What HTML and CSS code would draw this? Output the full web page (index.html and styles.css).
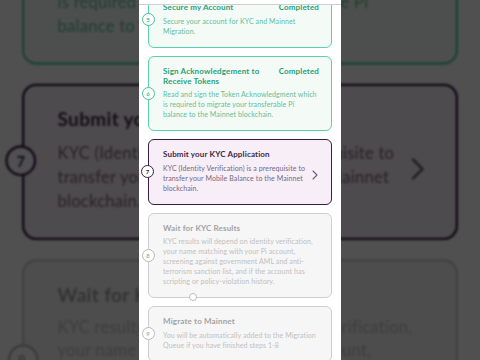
FILE: index.html
```html
<!DOCTYPE html>
<html lang="en">
<head>
<meta charset="utf-8">
<title>Mainnet Checklist</title>
<link rel="stylesheet" href="styles.css">
</head>
<body>
<div class="stage">
  <div class="backdrop" aria-hidden="true">
    <div class="phone phone-blur">
      <div class="topbar"></div>
      <div class="steps">
        <div class="step done">
          <span class="step-num">5</span>
          <div class="step-body">
            <div class="step-head"><span class="step-title">Secure my Account</span><span class="step-status">Completed</span></div>
            <p class="step-desc lines">Secure your account for KYC and Mainnet<br>Migration.</p>
          </div>
        </div>
        <div class="step done">
          <span class="step-num">6</span>
          <div class="step-body">
            <div class="step-head"><span class="step-title">Sign Acknowledgement to Receive Tokens</span><span class="step-status">Completed</span></div>
            <p class="step-desc lines">Read and sign the Token Acknowledgment which<br>is required to migrate your transferable Pi<br>balance to the Mainnet blockchain.</p>
          </div>
        </div>
        <div class="step active">
          <span class="step-num">7</span>
          <div class="step-body">
            <div class="step-head"><span class="step-title">Submit your KYC Application</span></div>
            <p class="step-desc">KYC (Identity Verification) is a prerequisite to transfer your Mobile Balance to the Mainnet blockchain.</p>
          </div>
          <svg class="chevron" viewBox="0 0 6 10" width="6" height="10"><path d="M1 1 L5 5 L1 9" fill="none" stroke="currentColor" stroke-width="1.1" stroke-linecap="round" stroke-linejoin="round"/></svg>
        </div>
        <div class="step pending">
          <span class="step-num">8</span>
          <div class="step-body">
            <div class="step-head"><span class="step-title">Wait for KYC Results</span></div>
            <p class="step-desc">KYC results will depend on identity verification, your name matching with your Pi account, screening against government AML and anti-terrorism sanction list, and if the account has scripting or policy-violation history.</p>
          </div>
        </div>
        <div class="step pending">
          <span class="step-num">9</span>
          <div class="step-body">
            <div class="step-head"><span class="step-title">Migrate to Mainnet</span></div>
            <p class="step-desc">You will be automatically added to the Migration Queue if you have finished steps 1-8</p>
          </div>
        </div>
      </div>
    </div>
  </div>

  <div class="phone phone-main">
    <div class="topbar"></div>
    <div class="steps">
      <div class="step done">
        <span class="step-num">5</span>
        <div class="step-body">
          <div class="step-head"><span class="step-title">Secure my Account</span><span class="step-status">Completed</span></div>
          <p class="step-desc lines">Secure your account for KYC and Mainnet<br>Migration.</p>
        </div>
      </div>
      <div class="step done">
        <span class="step-num">6</span>
        <div class="step-body">
          <div class="step-head"><span class="step-title">Sign Acknowledgement to Receive Tokens</span><span class="step-status">Completed</span></div>
          <p class="step-desc lines">Read and sign the Token Acknowledgment which<br>is required to migrate your transferable Pi<br>balance to the Mainnet blockchain.</p>
        </div>
      </div>
      <div class="step active">
        <span class="step-num">7</span>
        <div class="step-body">
          <div class="step-head"><span class="step-title">Submit your KYC Application</span></div>
          <p class="step-desc">KYC (Identity Verification) is a prerequisite to transfer your Mobile Balance to the Mainnet blockchain.</p>
        </div>
        <svg class="chevron" viewBox="0 0 6 10" width="6" height="10"><path d="M1 1 L5 5 L1 9" fill="none" stroke="currentColor" stroke-width="1.1" stroke-linecap="round" stroke-linejoin="round"/></svg>
      </div>
      <div class="step pending">
        <span class="step-num">8</span>
        <div class="step-body">
          <div class="step-head"><span class="step-title">Wait for KYC Results</span></div>
          <p class="step-desc">KYC results will depend on identity verification, your name matching with your Pi account, screening against government AML and anti-terrorism sanction list, and if the account has scripting or policy-violation history.</p>
        </div>
      </div>
      <div class="step pending">
        <span class="step-num">9</span>
        <div class="step-body">
          <div class="step-head"><span class="step-title">Migrate to Mainnet</span></div>
          <p class="step-desc">You will be automatically added to the Migration Queue if you have finished steps 1-8</p>
        </div>
      </div>
    </div>
    <span class="scrub"></span>
  </div>
</div>
</body>
</html>
```

FILE: styles.css
```css
* { box-sizing: border-box; }

html, body {
  margin: 0;
  padding: 0;
  background: #505050;
}

body {
  font-family: "Lato", "Liberation Sans", sans-serif;
}

.stage {
  position: relative;
  width: 480px;
  height: 360px;
  overflow: hidden;
  display: flex;
  justify-content: center;
  background: #505050;
}

.backdrop {
  position: absolute;
  inset: 0;
  display: flex;
  justify-content: center;
  overflow: hidden;
}

.phone {
  position: relative;
  flex: none;
  width: 202px;
  height: 360px;
  background: #ffffff;
  overflow: hidden;
}

.phone-blur {
  transform-origin: 50% 179.4px;
  transform: scale(2.37);
  filter: brightness(0.315) blur(0.45px);
}

.phone-main {
  z-index: 1;
}

.topbar {
  position: absolute;
  top: 0;
  left: 0;
  right: 0;
  height: 5px;
  background: #ffffff;
  border-bottom: 1px solid #cfcfcf;
  z-index: 2;
}

.steps {
  display: flex;
  flex-direction: column;
  gap: 8px;
  padding: 0 9px;
  margin-top: -8px;
}

.step {
  position: relative;
  display: flex;
  align-items: center;
  border: 1px solid;
  border-radius: 6px;
  padding: 9px 12px 11px 14px;
}

.step-body {
  flex: 1;
  min-width: 0;
}

.step-head {
  display: flex;
  justify-content: space-between;
  align-items: flex-start;
  gap: 10px;
}

.step-title {
  font-size: 8px;
  line-height: 10px;
  font-weight: 700;
  letter-spacing: 0.15px;
}

.step-status {
  font-size: 8px;
  line-height: 10px;
  font-weight: 700;
  letter-spacing: 0.15px;
  white-space: nowrap;
}

.step-desc {
  margin: 3.5px 0 0;
  font-size: 7px;
  line-height: 10px;
  letter-spacing: 0.1px;
}

.step-desc.lines {
  white-space: nowrap;
}

.step-num {
  position: absolute;
  left: -7.5px;
  top: 50%;
  width: 13px;
  height: 13px;
  margin-top: -6.5px;
  border-radius: 50%;
  border: 1px solid;
  background: #ffffff;
  display: flex;
  align-items: center;
  justify-content: center;
  font-size: 6px;
  font-weight: 700;
}

.chevron {
  flex: none;
  margin: 8px 1px 0 2px;
}

/* completed */
.done {
  border-color: #5ad1ad;
  background: #f4fbf7;
}
.done .step-title,
.done .step-status { color: #26a17a; }
.done .step-desc { color: #5fbd98; }
.done .step-num { border-color: #45c09a; color: #45c09a; }

/* active */
.active {
  border: 1.5px solid #3a1d45;
  background: #f7eef8;
}
.active .step-title { color: #3c2b42; }
.active .step-desc { color: #76687a; }
.active .step-num { border-color: #3a1d45; color: #3a1d45; left: -8px; }
.active .chevron { color: #6e6372; }

/* pending */
.pending {
  border-color: #cfcfcf;
  background: #f6f6f6;
}
.pending .step-title { color: #a3a3a3; }
.pending .step-desc { color: #c0c0c0; }
.pending .step-num { border-color: #b9b9b9; color: #aaaaaa; }

.scrub {
  position: absolute;
  left: 50px;
  top: 293px;
  width: 8px;
  height: 8px;
  border-radius: 50%;
  border: 1px solid #bdbdbd;
  background: #ffffff;
  z-index: 3;
}
```
